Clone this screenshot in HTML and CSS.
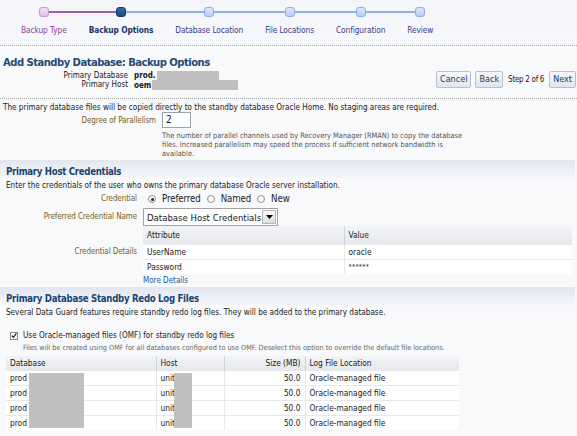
FILE: index.html
```html
<!DOCTYPE html>
<html>
<head>
<meta charset="utf-8">
<link rel="stylesheet" href="styles.css">
</head>
<body>
<div class="train">
  <div class="step done first"><div class="track"><span class="ln"></span><span class="dot"></span><span class="ln"></span></div><div class="lbl">Backup Type</div></div>
  <div class="step cur"><div class="track"><span class="ln"></span><span class="dot"></span><span class="ln"></span></div><div class="lbl">Backup Options</div></div>
  <div class="step"><div class="track"><span class="ln"></span><span class="dot"></span><span class="ln"></span></div><div class="lbl">Database Location</div></div>
  <div class="step"><div class="track"><span class="ln"></span><span class="dot"></span><span class="ln"></span></div><div class="lbl">File Locations</div></div>
  <div class="step"><div class="track"><span class="ln"></span><span class="dot"></span><span class="ln"></span></div><div class="lbl">Configuration</div></div>
  <div class="step last"><div class="track"><span class="ln"></span><span class="dot"></span><span class="ln"></span></div><div class="lbl">Review</div></div>
</div>

<div class="head">
  <div class="head-left">
    <h1>Add Standby Database: Backup Options</h1>
    <div class="meta">
      <span class="mlabel">Primary Database</span><span class="mval">prod.<span class="redact r1"></span></span>
      <span class="mlabel">Primary Host</span><span class="mval">oem<span class="redact r2"></span></span>
    </div>
  </div>
  <div class="nav">
    <span class="btn">Cancel</span>
    <span class="btn">Back</span>
    <span class="step-of">Step 2 of 6</span>
    <span class="btn">Next</span>
  </div>
</div>

<p class="intro">The primary database files will be copied directly to the standby database Oracle Home. No staging areas are required.</p>

<div class="frow frow1">
  <span class="flabel">Degree of Parallelism</span>
  <div class="fctl">
    <span class="input">2</span>
    <p class="help">The number of parallel channels used by Recovery Manager (RMAN) to copy the database files. Increased parallelism may speed the process if sufficient network bandwidth is available.</p>
  </div>
</div>

<div class="band"><h2>Primary Host Credentials</h2></div>
<p class="desc">Enter the credentials of the user who owns the primary database Oracle server installation.</p>

<div class="frow frow2">
  <span class="flabel">Credential</span>
  <div class="radios"><span class="radio on"></span><span class="rl">Preferred</span><span class="radio"></span><span class="rl">Named</span><span class="radio"></span><span class="rl">New</span></div>
</div>
<div class="frow frow2">
  <span class="flabel">Preferred Credential Name</span>
  <span class="select"><span class="sel-text">Database Host Credentials</span><span class="sel-btn"><svg width="7" height="4" viewBox="0 0 7 4"><path d="M0 0H7L3.5 4Z" fill="#000"/></svg></span></span>
</div>
<div class="frow frow2 top">
  <span class="flabel cdl">Credential Details</span>
  <div class="fctl">
    <table class="grid cred">
      <thead><tr><th class="c-attr">Attribute</th><th>Value</th></tr></thead>
      <tbody>
        <tr><td>UserName</td><td>oracle</td></tr>
        <tr><td>Password</td><td class="pw">******</td></tr>
      </tbody>
    </table>
    <a class="link">More Details</a>
  </div>
</div>

<div class="band band2"><h2>Primary Database Standby Redo Log Files</h2></div>
<p class="desc desc2">Several Data Guard features require standby redo log files. They will be added to the primary database.</p>

<div class="omf">
  <div class="chkrow"><span class="chk"><svg width="7" height="7" viewBox="0 0 7 7"><path d="M1 3.6L2.8 5.6L6.2 1" fill="none" stroke="#111" stroke-width="1.3"/></svg></span><span>Use Oracle-managed files (OMF) for standby redo log files</span></div>
  <p class="note">Files will be created using OMF for all databases configured to use OMF. Deselect this option to override the default file locations.</p>
</div>

<div class="tblwrap">
  <table class="grid logs">
    <thead><tr><th class="c-db">Database</th><th class="c-host">Host</th><th class="c-size">Size (MB)</th><th>Log File Location</th></tr></thead>
    <tbody>
      <tr><td>prod</td><td>unit</td><td class="num">50.0</td><td>Oracle-managed file</td></tr>
      <tr><td>prod</td><td>unit</td><td class="num">50.0</td><td>Oracle-managed file</td></tr>
      <tr><td>prod</td><td>unit</td><td class="num">50.0</td><td>Oracle-managed file</td></tr>
      <tr><td>prod</td><td>unit</td><td class="num">50.0</td><td>Oracle-managed file</td></tr>
    </tbody>
  </table>
  <span class="redact r3"></span>
  <span class="redact r4"></span>
</div>
</body>
</html>
```
FILE: styles.css
```css
* { box-sizing: border-box; }
html, body { margin: 0; padding: 0; }
body {
  width: 577px;
  height: 436px;
  overflow: hidden;
  background: #f8f9fb;
  font-family: "DejaVu Sans Condensed", "DejaVu Sans", sans-serif;
  font-size: 8.1px;
  line-height: 9px;
  letter-spacing: 0;
  color: #1a1a1a;
}
p { margin: 0; }

/* train */
.train {
  display: flex;
  padding-left: 10px;
  height: 46px;
  background: linear-gradient(#f4f5f9, #f7f8fb);
  border-bottom: 1px dotted #a9a9a9;
  font-size: 8.3px;
  letter-spacing: -0.1px;
}
.step {
  display: flex;
  flex-direction: column;
  align-items: stretch;
  padding-top: 7px;
}
.track { display: flex; align-items: center; height: 10px; }
.ln { flex: 1; height: 2px; background: #8fb1e8; }
.first .ln:first-child, .last .ln:last-child { visibility: hidden; }
.done .ln:last-child { background: #a65aa8; }
.dot {
  width: 10px; height: 10px;
  border-radius: 3px;
  background: linear-gradient(#d9e5fb, #b9cdf3);
  border: 1px solid #8eaee6;
  flex: none;
}
.done .dot { background: linear-gradient(#efe0f7, #dcc3ee); border-color: #c29ad8; }
.cur .dot { background: linear-gradient(#2e6fa8, #174c7f); border-color: #163f69; }
.cur .ln:first-child { background: #a65aa8; }
.lbl {
  padding: 9px 11px 0;
  text-align: center;
  white-space: nowrap;
  color: #3a3a8c;
}
.done .lbl { color: #8d3d92; }
.cur .lbl { color: #1c3466; font-weight: bold; }

/* header */
.head {
  display: flex;
  justify-content: space-between;
  align-items: flex-end;
  padding: 9px 1px 8px 3px;
  border-bottom: 1px dotted #a9a9a9;
  margin-bottom: 4px;
}
h1 {
  margin: 0;
  font-size: 11.2px;
  line-height: 15px;
  font-weight: bold;
  letter-spacing: -0.55px;
  color: #1e4b74;
}
.meta {
  display: grid;
  grid-template-columns: 125px auto;
  column-gap: 6px;
  margin-top: 1px;
  font-size: 8px;
}
.mlabel { text-align: right; }
.mval { font-weight: bold; display: flex; align-items: center; }
.redact { display: inline-block; background: #c0c0c0; }
.r1 { width: 62px; height: 9px; margin-left: 1px; }
.r2 { width: 86px; height: 10px; margin-left: 1px; }
.nav { display: flex; align-items: center; gap: 4px; margin-bottom: 2px; }
.btn {
  height: 17px;
  line-height: 15px;
  padding: 0 3px;
  border: 1px solid #b6c0ce;
  border-radius: 2px;
  background: linear-gradient(#f6f8fb, #dfe6ef);
  color: #1d3a5c;
  font-size: 9px;
}
.step-of { padding: 0 1px; font-size: 8px; letter-spacing: -0.3px; }

.intro { padding-left: 3px; }

/* form rows */
.frow {
  display: flex;
  align-items: center;
  gap: 6px;
}
.frow.top { align-items: flex-start; }
.flabel {
  flex: none;
  text-align: right;
  color: #76601d;
  white-space: nowrap;
  font-size: 8px;
  letter-spacing: -0.1px;
}
.frow1 { align-items: flex-start; }
.frow1 .flabel { width: 156px; padding-top: 4px; }
.frow2 .flabel { width: 137px; }
.input {
  display: block;
  width: 29px; height: 16px;
  border: 1px solid #9aa3ad;
  background: #fff;
  padding-left: 3px;
  font-size: 10px;
  line-height: 14px;
}
.help {
  margin-top: 3px;
  width: 305px;
  font-size: 7.4px;
  line-height: 9px;
  color: #555;
}

.band {
  margin-top: 2px;
  height: 18px;
  margin-right: 2px;
  background: linear-gradient(#e1e6ee, #f1f3f7 70%, #f5f6f9);
  padding: 6px 0 0 6px;
}
h2 {
  margin: 0;
  font-size: 9.6px;
  line-height: 12px;
  font-weight: bold;
  letter-spacing: -0.3px;
  color: #1b4572;
}
.desc { padding: 3px 0 0 6px; }
.desc2 { padding-top: 3px; }

.radios {
  display: block;
  height: 17px;
  line-height: 17px;
  font-size: 9.6px;
  letter-spacing: -0.1px;
  white-space: nowrap;
}
.radio {
  display: inline-block;
  vertical-align: -1px;
  width: 8px; height: 8px;
  border-radius: 50%;
  border: 1px solid #8c8c8c;
  background: #fff;
  margin: 0 6px 0 5px;
  position: relative;
}
.radio.on::after {
  content: "";
  position: absolute;
  left: 1.5px; top: 1.5px;
  width: 3px; height: 3px;
  border-radius: 50%;
  background: #222;
}
.rl { margin-right: 1px; }

.select {
  display: flex;
  align-items: center;
  width: 135px; height: 18px;
  margin-top: 1px;
  border: 1px solid #a3a3a3;
  background: #fff;
  font-size: 9.5px;
}
.sel-text { flex: 1; padding-left: 3px; white-space: nowrap; }
.sel-btn {
  width: 14px; height: 14px;
  margin-right: 1px;
  border: 1px solid #b5b5b5;
  background: linear-gradient(#fafafa, #dcdcdc);
  display: flex; align-items: center; justify-content: center;
}

.cdl { padding-top: 21px; }

table.grid {
  border-collapse: collapse;
  background: #fff;
  font-size: 8.3px;
}
.grid th {
  text-align: left;
  font-weight: normal;
  background: linear-gradient(#f3f4f6, #e6e8ec);
  border-right: 1px solid #d0d4da;
  padding: 0 4px;
  white-space: nowrap;
}
.grid th:last-child { border-right: none; }
.grid td {
  padding: 0 4px;
  line-height: 14px;
  border-top: 1px solid #e6e8eb;
  border-right: 1px solid #e6e8eb;
  white-space: nowrap;
}
.grid td:last-child { border-right: none; }
.cred { width: 429px; }
.cred th { line-height: 18px; }
.c-attr { width: 201px; }
.pw { font-size: 7px; letter-spacing: 0.3px; }
.link { display: block; color: #1f5a9e; padding-top: 2px; line-height: 9px; font-size: 8px; }

.band2 { margin-top: 2px; }

.omf { padding: 0 0 0 10px; margin-top: 14px; }
.chkrow { display: flex; align-items: center; gap: 5px; height: 9px; }
.chk {
  width: 8px; height: 8px;
  border: 1px solid #8a8a8a;
  background: #fff;
  display: flex; align-items: center; justify-content: center;
}
.note { padding: 3px 0 0 13px; font-size: 7.25px; color: #666; }

.tblwrap { position: relative; padding-left: 6px; margin-top: 4px; }
.logs { width: 453px; }
.logs th { line-height: 14px; }
.c-db { width: 150px; }
.c-host { width: 68px; }
.c-size { width: 81px; text-align: right !important; }
.num { text-align: right; }
.r3 { position: absolute; left: 29px; top: 17px; width: 55px; height: 55px; }
.r4 { position: absolute; left: 174px; top: 17px; width: 18px; height: 55px; }
```
